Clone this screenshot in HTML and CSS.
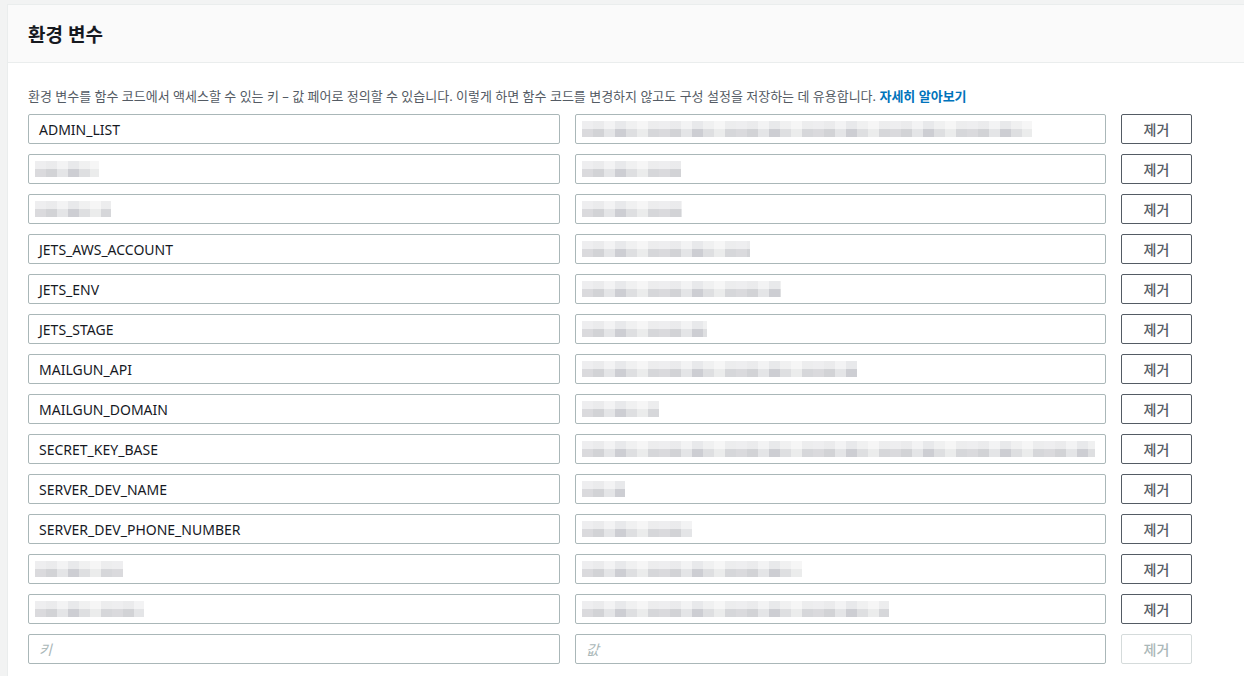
FILE: index.html
```html
<!DOCTYPE html>
<html lang="ko">
<head>
  <meta charset="UTF-8">
  <title>환경 변수</title>
  <link rel="stylesheet" href="styles.css">
</head>
<body>

  <div class="panel">
    <div class="panel-header">
      <h2>환경 변수</h2>
    </div>

    <div class="panel-body">
      <p class="desc">환경 변수를 함수 코드에서 액세스할 수 있는 키 – 값 페어로 정의할 수 있습니다. 이렇게 하면 함수 코드를 변경하지 않고도 구성 설정을 저장하는 데 유용합니다. <a href="#">자세히 알아보기</a></p>

      <div class="env-list">
        <div class="field">ADMIN_LIST</div>
        <div class="field"><span class="mask" style="width:450px"></span></div>
        <button class="btn">제거</button>

        <div class="field"><span class="mask" style="width:64px"></span></div>
        <div class="field"><span class="mask" style="width:99px"></span></div>
        <button class="btn">제거</button>

        <div class="field"><span class="mask" style="width:76px"></span></div>
        <div class="field"><span class="mask" style="width:100px"></span></div>
        <button class="btn">제거</button>

        <div class="field">JETS_AWS_ACCOUNT</div>
        <div class="field"><span class="mask" style="width:168px"></span></div>
        <button class="btn">제거</button>

        <div class="field">JETS_ENV</div>
        <div class="field"><span class="mask" style="width:199px"></span></div>
        <button class="btn">제거</button>

        <div class="field">JETS_STAGE</div>
        <div class="field"><span class="mask" style="width:125px"></span></div>
        <button class="btn">제거</button>

        <div class="field">MAILGUN_API</div>
        <div class="field"><span class="mask" style="width:275px"></span></div>
        <button class="btn">제거</button>

        <div class="field">MAILGUN_DOMAIN</div>
        <div class="field"><span class="mask" style="width:77px"></span></div>
        <button class="btn">제거</button>

        <div class="field">SECRET_KEY_BASE</div>
        <div class="field"><span class="mask" style="width:517px"></span></div>
        <button class="btn">제거</button>

        <div class="field">SERVER_DEV_NAME</div>
        <div class="field"><span class="mask" style="width:43px"></span></div>
        <button class="btn">제거</button>

        <div class="field">SERVER_DEV_PHONE_NUMBER</div>
        <div class="field"><span class="mask" style="width:110px"></span></div>
        <button class="btn">제거</button>

        <div class="field"><span class="mask" style="width:88px"></span></div>
        <div class="field"><span class="mask" style="width:220px"></span></div>
        <button class="btn">제거</button>

        <div class="field"><span class="mask" style="width:109px"></span></div>
        <div class="field"><span class="mask" style="width:307px"></span></div>
        <button class="btn">제거</button>

        <!-- new empty row -->
        <div class="field"><span class="placeholder">키</span></div>
        <div class="field"><span class="placeholder">값</span></div>
        <button class="btn" disabled>제거</button>
      </div>
    </div>
  </div>

</body>
</html>
```

FILE: styles.css
```css
html {
  overflow: hidden;
}

body {
  margin: 0;
  background: #f2f3f3;
  font-family: "Noto Sans", "Noto Sans CJK KR", sans-serif;
  color: #16191f;
}

.panel {
  margin: 4px 0 0 7px;
  width: 1280px;
  background: #fff;
  border: 1px solid #eaeded;
  min-height: 700px;
}

.panel-header {
  background: #fafafa;
  border-bottom: 1px solid #eaeded;
  height: 57px;
  padding: 0 20px;
  display: flex;
  align-items: center;
}

.panel-header h2 {
  margin: 0;
  font-size: 19px;
  font-weight: 700;
}

.panel-body {
  padding: 23px 20px;
}

.desc {
  margin: 0 0 8px;
  font-size: 13px;
  line-height: 20px;
  color: #545b64;
}

.desc a {
  color: #0073bb;
  font-weight: 700;
  text-decoration: none;
}

/* key / value / remove grid */
.env-list {
  display: grid;
  grid-template-columns: 532px 531px 71px;
  column-gap: 15px;
  row-gap: 10px;
}

.field {
  height: 30px;
  box-sizing: border-box;
  border: 1px solid #aab7b8;
  border-radius: 2px;
  padding: 0 10px;
  display: flex;
  align-items: center;
  font-size: 14px;
  white-space: nowrap;
  overflow: hidden;
}

.placeholder {
  color: #aab7b8;
  font-style: italic;
}

/* pixelated / hidden values */
.mask {
  display: inline-block;
  height: 16px;
  margin-left: -4px;
  background:
    linear-gradient(rgba(255, 255, 255, 0.55) 0 8px, transparent 8px),
    repeating-linear-gradient(90deg,
      #dadadd 0 11px, #d2d3d6 11px 22px, #e4e5e7 22px 33px,
      #cdced3 33px 44px, #dedfe1 44px 55px, #ebecec 55px 66px,
      #d6d7da 66px 77px);
}

.btn {
  height: 30px;
  box-sizing: border-box;
  background: #fff;
  border: 1px solid #545b64;
  border-radius: 2px;
  color: #545b64;
  font-family: inherit;
  font-size: 14px;
  font-weight: 500;
  padding: 0;
  cursor: pointer;
}

.btn:disabled {
  border-color: #d5dbdb;
  color: #aab7b8;
  cursor: default;
}
```
